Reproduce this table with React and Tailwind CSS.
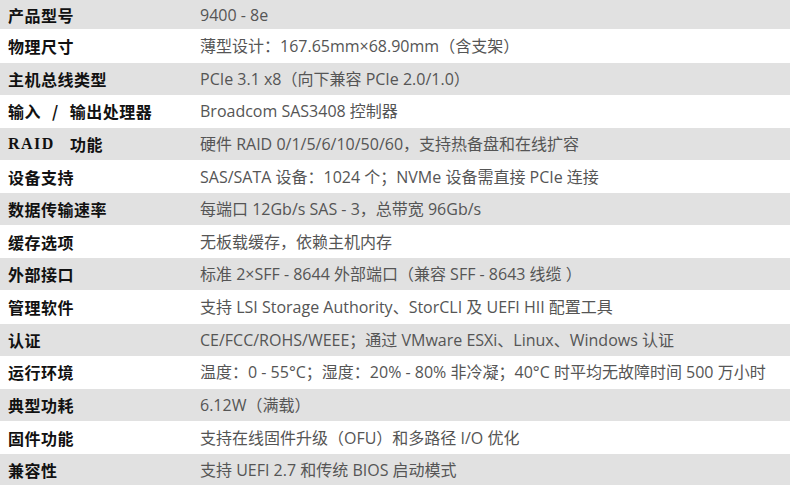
const rows = [
  ["产品型号", "9400 - 8e"],
  ["物理尺寸", "薄型设计：167.65mm×68.90mm（含支架）"],
  ["主机总线类型", "PCIe 3.1 x8（向下兼容 PCIe 2.0/1.0）"],
  ["输入 / 输出处理器", "Broadcom SAS3408 控制器"],
  ["RAID 功能", "硬件 RAID 0/1/5/6/10/50/60，支持热备盘和在线扩容"],
  ["设备支持", "SAS/SATA 设备：1024 个；NVMe 设备需直接 PCIe 连接"],
  ["数据传输速率", "每端口 12Gb/s SAS - 3，总带宽 96Gb/s"],
  ["缓存选项", "无板载缓存，依赖主机内存"],
  ["外部接口", "标准 2×SFF - 8644 外部端口（兼容 SFF - 8643 线缆 ）"],
  ["管理软件", "支持 LSI Storage Authority、StorCLI 及 UEFI HII 配置工具"],
  ["认证", "CE/FCC/ROHS/WEEE；通过 VMware ESXi、Linux、Windows 认证"],
  ["运行环境", "温度：0 - 55°C；湿度：20% - 80% 非冷凝；40°C 时平均无故障时间 500 万小时"],
  ["典型功耗", "6.12W（满载）"],
  ["固件功能", "支持在线固件升级（OFU）和多路径 I/O 优化"],
  ["兼容性", "支持 UEFI 2.7 和传统 BIOS 启动模式"],
];

function Label({ text }) {
  if (text === "RAID 功能") {
    return (
      <span className="flex items-center">
        <span className="font-['Liberation_Serif',serif] font-bold text-[16px] tracking-[1.5px]">RAID</span>
        <span className="ml-[15px]">功能</span>
      </span>
    );
  }
  if (text === "输入 / 输出处理器") {
    return (
      <span className="flex items-center">
        <span>输入</span>
        <span className="ml-[11px] mr-[11px]">/</span>
        <span>输出处理器</span>
      </span>
    );
  }
  return <span>{text}</span>;
}

export default function App() {
  return (
    <div className="w-[790px] h-[485px] overflow-hidden bg-white">
      {rows.map(([label, value], i) => {
        const gray = i % 2 === 0;
        const h = i === 0 ? "h-[29.3px]" : gray ? "h-[32px]" : "h-[33.3px]";
        return (
          <div
            key={i}
            className={`flex items-center ${h} ${gray ? "bg-[#e1e1e1]" : "bg-white"}`}
          >
            <div className="w-[200px] pl-[8px] text-[16px] font-bold tracking-[0.5px] text-[#111] font-['Noto_Sans_CJK_SC',sans-serif] whitespace-nowrap">
              <Label text={label} />
            </div>
            <div className="flex-1 text-[16px] text-[#555] font-['Open_Sans','Noto_Sans_CJK_SC',sans-serif] whitespace-nowrap">
              {value}
            </div>
          </div>
        );
      })}
    </div>
  );
}
